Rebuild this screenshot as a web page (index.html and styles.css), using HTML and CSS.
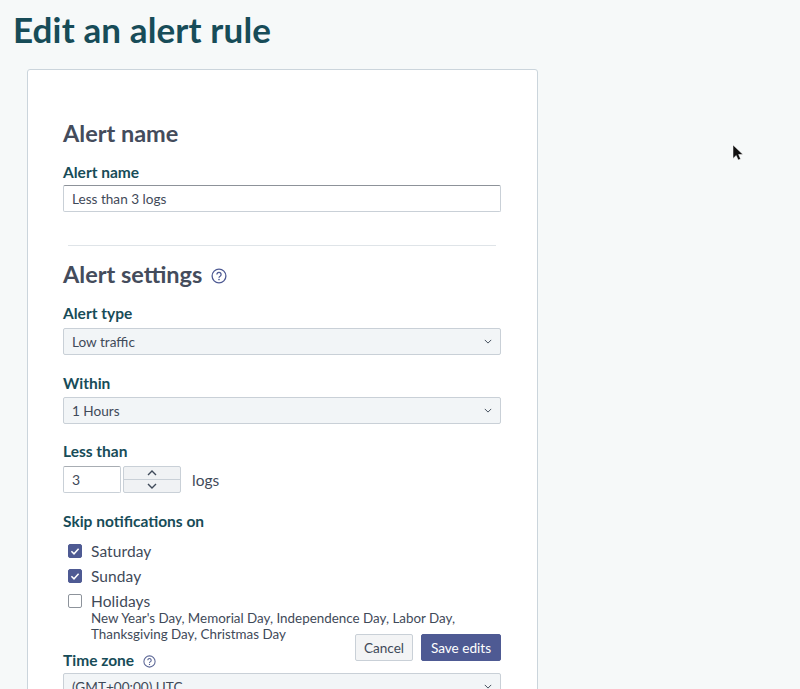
FILE: index.html
```html
<!DOCTYPE html>
<html lang="en">
<head>
<meta charset="utf-8">
<title>Edit an alert rule</title>
<link rel="stylesheet" href="styles.css">
</head>
<body>
<h1 class="page-title">Edit an alert rule</h1>
<main class="card">
  <section class="section">
    <h2 class="section-title">Alert name</h2>
    <label class="label">Alert name</label>
    <div class="field text-field">Less than 3 logs</div>
  </section>
  <hr class="divider">
  <section class="section">
    <h2 class="section-title settings-title">Alert settings
      <svg class="help help-lg" viewBox="0 0 16 16"><circle cx="8" cy="8" r="6.9"/><path d="M5.9 6.4a2.1 2.1 0 1 1 3.2 1.8c-.7.4-1.1.8-1.1 1.6"/><circle class="dot" cx="8" cy="11.6" r=".8"/></svg>
    </h2>
    <label class="label">Alert type</label>
    <div class="field select type-select">Low traffic
      <svg class="chev" viewBox="0 0 10 6"><path d="M1 1l4 4 4-4"/></svg>
    </div>
    <label class="label within">Within</label>
    <div class="field select within-select">1 Hours
      <svg class="chev" viewBox="0 0 10 6"><path d="M1 1l4 4 4-4"/></svg>
    </div>
    <label class="label less">Less than</label>
    <div class="number-row">
      <div class="field number">3</div>
      <div class="stepper">
        <div class="step"><svg class="chev-step" viewBox="0 0 10 6"><path d="M1 5l4-4 4 4"/></svg></div>
        <div class="step"><svg class="chev-step" viewBox="0 0 10 6"><path d="M1 1l4 4 4-4"/></svg></div>
      </div>
      <span class="unit">logs</span>
    </div>
    <label class="label skip">Skip notifications on</label>
    <div class="check-row first"><span class="box on"><svg viewBox="0 0 12 12"><path d="M2.4 6.2l2.6 2.6 4.6-5"/></svg></span>Saturday</div>
    <div class="check-row"><span class="box on"><svg viewBox="0 0 12 12"><path d="M2.4 6.2l2.6 2.6 4.6-5"/></svg></span>Sunday</div>
    <div class="check-row holidays"><span class="box"></span>Holidays</div>
    <p class="hint">New Year's Day, Memorial Day, Independence Day, Labor Day,<br>Thanksgiving Day, Christmas Day</p>
    <label class="label zone">Time zone
      <svg class="help help-sm" viewBox="0 0 16 16"><circle cx="8" cy="8" r="6.9"/><path d="M5.9 6.4a2.1 2.1 0 1 1 3.2 1.8c-.7.4-1.1.8-1.1 1.6"/><circle class="dot" cx="8" cy="11.6" r=".8"/></svg>
    </label>
    <div class="field select">(GMT+00:00) UTC
      <svg class="chev" viewBox="0 0 10 6"><path d="M1 1l4 4 4-4"/></svg>
    </div>
  </section>
  <div class="actions">
    <button class="btn cancel">Cancel</button>
    <button class="btn save">Save edits</button>
  </div>
</main>
<svg class="cursor" viewBox="0 0 12 17"><path d="M1 1v13.5l3.2-3 2 4.5 2.4-1-2-4.5h4.4z"/></svg>
</body>
</html>
```
FILE: styles.css
```css
* { box-sizing: border-box; }
html, body { height: 100%; }
body {
  margin: 0;
  height: 689px;
  overflow: hidden;
  position: relative;
  background: #f6f9f9;
  font-family: "Lato", "Noto Sans", sans-serif;
  color: #3f4a59;
}
.page-title {
  margin: 0;
  padding: 9px 0 0 13px;
  height: 69px;
  font-size: 35px;
  line-height: 40px;
  font-weight: 700;
  letter-spacing: .13px;
  color: #174c58;
}
.card {
  position: relative;
  width: 511px;
  height: 700px;
  margin-left: 27px;
  padding: 48px 36px 0 35px;
  background: #fff;
  border: 1px solid #cbd5dc;
  border-radius: 3px;
}
.section-title {
  margin: 0;
  font-size: 23.5px;
  line-height: 30px;
  font-weight: 700;
  color: #444c5c;
}
.label {
  display: block;
  margin-top: 14px;
  font-size: 15.5px;
  line-height: 20px;
  font-weight: 700;
  color: #174c58;
}
.field {
  display: flex;
  align-items: center;
  height: 27px;
  margin-top: 3px;
  padding-left: 8px;
  font-size: 13.6px;
  color: #3f4a59;
  background: #fff;
  border: 1px solid #c9d0d7;
  border-radius: 2px;
}
.text-field { border-top-color: #8d9299; }
.divider {
  margin: 33px 5px 0;
  border: 0;
  border-top: 1px solid #dfe4e8;
}
.settings-title {
  display: flex;
  align-items: center;
  gap: 9px;
  margin-top: 13px;
}
.help { fill: none; stroke: #4e5a93; stroke-width: 1.3; }
.help .dot { fill: #4e5a93; stroke: none; }
.help-lg { width: 16px; height: 16px; margin-top: 3px; }
.help-sm { width: 13px; height: 13px; margin-left: 5px; vertical-align: -2px; stroke: #5c6796; }
.select {
  justify-content: space-between;
  padding-right: 8px;
  background: #f2f5f7;
  border-color: #c9d0d7;
}
.type-select { margin-top: 5px; }
.within-select { margin-top: 4px; }
.chev { width: 8px; height: 5px; fill: none; stroke: #3f4a59; stroke-width: 1.2; }
.within { margin-top: 18px; }
.less { margin-top: 17px; }
.number-row {
  display: flex;
  align-items: center;
  margin-top: 5px;
}
.number {
  width: 58px;
  margin-top: 0;
  font-size: 14px;
  border-top-color: #a8adb3;
}
.stepper {
  display: flex;
  flex-direction: column;
  width: 58px;
  height: 27px;
  margin-left: 2px;
  background: #f0f2f4;
  border: 1px solid #c9d0d7;
  border-radius: 2px;
}
.step {
  flex: 1;
  display: flex;
  align-items: center;
  justify-content: center;
}
.step + .step { border-top: 1px solid #c9d0d7; }
.chev-step { width: 10px; height: 6px; fill: none; stroke: #3f4a59; stroke-width: 1.4; }
.unit { margin-left: 11px; font-size: 15.5px; }
.skip { margin-top: 18px; }
.check-row {
  display: flex;
  align-items: center;
  gap: 9px;
  height: 20px;
  margin: 5px 0 0 5px;
  font-size: 15.5px;
  letter-spacing: .1px;
  color: #3f4a59;
}
.check-row.first { margin-top: 10px; }
.check-row.holidays { margin-top: 5px; }
.box {
  width: 14px;
  height: 14px;
  flex: none;
  background: #fff;
  border: 1px solid #8d939b;
  border-radius: 2px;
}
.box.on { background: #4e5a93; border-color: #4e5a93; }
.box svg { display: block; width: 12px; height: 12px; fill: none; stroke: #fff; stroke-width: 1.5; }
.hint {
  margin: -1px 0 0 28px;
  font-size: 13.4px;
  line-height: 16px;
  color: #3f4a59;
}
.zone { margin-top: 8px; }
.actions {
  position: absolute;
  top: 564px;
  left: 327px;
  display: flex;
  gap: 8px;
}
.btn {
  height: 27px;
  padding: 0;
  font: 13.6px "Lato", "Noto Sans", sans-serif;
  border-radius: 2px;
}
.cancel { width: 58px; background: #f3f4f5; color: #3f4a59; border: 1px solid #c9d0d7; }
.save { width: 80px; background: #4e5a93; color: #fff; border: 1px solid #4e5a93; }
.cursor {
  position: absolute;
  left: 732px;
  top: 144px;
  width: 12px;
  height: 17px;
  fill: #111;
  stroke: #fff;
  stroke-width: .5;
}
```
